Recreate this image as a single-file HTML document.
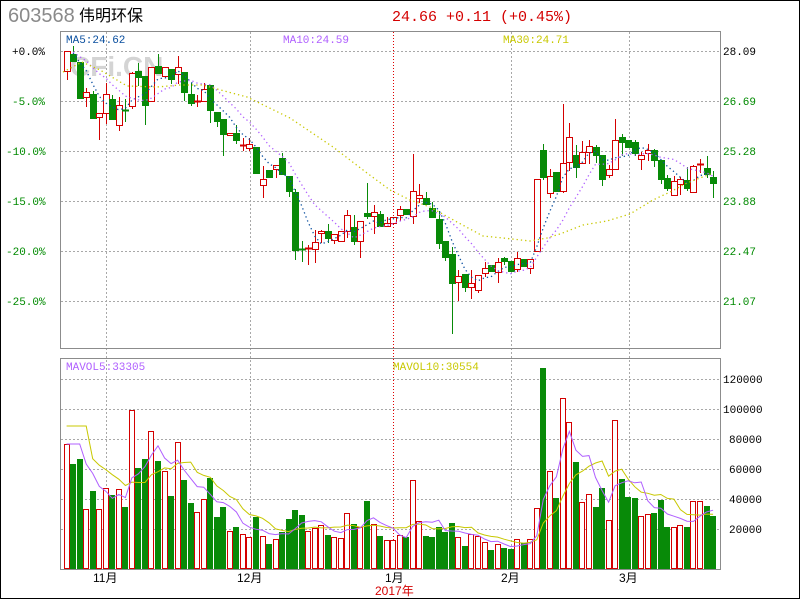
<!DOCTYPE html>
<html><head><meta charset="utf-8">
<style>
html,body{margin:0;padding:0;background:#fff;}
#w{position:relative;width:798px;height:597px;border:1px solid #000;overflow:hidden;font-family:"Liberation Mono","Noto Sans CJK SC",monospace;}
svg{position:absolute;left:-1px;top:-1px;}
</style></head><body>
<div id="w">
<svg id="s" width="800" height="600" xmlns="http://www.w3.org/2000/svg" font-family="Liberation Mono, Noto Sans CJK SC, monospace">
<text x="8" y="22" font-family="Liberation Sans, sans-serif" font-size="20" fill="#8a8a8a">603568</text>
<text x="79" y="21" font-family="Liberation Sans, Noto Sans CJK SC, sans-serif" font-size="16" fill="#000">伟明环保</text>
<text x="392" y="21" font-size="15" fill="#d40000">24.66 +0.11 (+0.45%)</text>
<text x="70" y="76" font-family="Liberation Sans, sans-serif" font-weight="bold" font-size="28" fill="#d4d4d4">CFi.CN</text>
<g id="grid"></g>
<rect x="60.5" y="31.5" width="660" height="317" fill="none" stroke="#8c8c8c"/>
<rect x="60.5" y="358.5" width="660" height="211" fill="none" stroke="#8c8c8c"/>
<g id="c"></g>
<text x="66" y="43" font-size="11" fill="#0a4f9f">MA5:24.62</text>
<text x="283" y="43" font-size="11" fill="#b060ff">MA10:24.59</text>
<text x="503" y="43" font-size="11" fill="#c8c800">MA30:24.71</text>
<text x="66" y="370" font-size="11" fill="#b060ff">MAVOL5:33305</text>
<text x="393" y="370" font-size="11" fill="#c8c800">MAVOL10:30554</text>
<g font-size="11">
<text x="12" y="55" fill="#000">+0.0%</text>
<text x="12" y="105" fill="#008a00">-5.0%</text>
<text x="6" y="155" fill="#008a00">-10.0%</text>
<text x="6" y="205" fill="#008a00">-15.0%</text>
<text x="6" y="255" fill="#008a00">-20.0%</text>
<text x="6" y="305" fill="#008a00">-25.0%</text>
<text x="723" y="55" fill="#000">28.09</text>
<text x="723" y="105" fill="#008a00">26.69</text>
<text x="723" y="155" fill="#008a00">25.28</text>
<text x="723" y="205" fill="#008a00">23.88</text>
<text x="723" y="255" fill="#008a00">22.47</text>
<text x="723" y="305" fill="#008a00">21.07</text>
<text x="723" y="383" fill="#000">120000</text>
<text x="723" y="413" fill="#000">100000</text>
<text x="729" y="443" fill="#000">80000</text>
<text x="729" y="473" fill="#000">60000</text>
<text x="729" y="503" fill="#000">40000</text>
<text x="729" y="533" fill="#000">20000</text>
</g>
<g font-size="12" font-family="Liberation Sans, Noto Sans CJK SC, sans-serif" fill="#000">
<text x="93" y="582">11月</text>
<text x="237" y="582">12月</text>
<text x="385" y="582">1月</text>
<text x="501" y="582">2月</text>
<text x="619" y="582">3月</text>
<text x="375" y="595" fill="#d40000">2017年</text>
</g>
</svg>
</div>
<script>
var NS="http://www.w3.org/2000/svg";
function el(p,t,a){var e=document.createElementNS(NS,t);for(var k in a)e.setAttribute(k,a[k]);p.appendChild(e);return e;}
var g=document.getElementById('grid'),c=document.getElementById('c');
[51,101,151,201,251,301].forEach(function(y){el(g,'line',{x1:61,x2:720,y1:y+.5,y2:y+.5,stroke:'#a8a8a8','stroke-dasharray':'2,2'});});
[379,409,439,469,499,529].forEach(function(y){el(g,'line',{x1:61,x2:720,y1:y+.5,y2:y+.5,stroke:'#a8a8a8','stroke-dasharray':'2,2'});});
[106,250,511,629].forEach(function(x){el(g,'line',{x1:x+.5,x2:x+.5,y1:32,y2:569,stroke:'#a8a8a8','stroke-dasharray':'2,2'});});
el(g,'line',{x1:393.5,x2:393.5,y1:32,y2:569,stroke:'#e00000','stroke-dasharray':'1,2'});
var D="R 51 71 51 79|G 54 61 46 61|G 62 98 62 98|R 92 97 88 106|G 94 118 91 118|R 113 117 113 139|R 94 113 83 123|G 99 119 95 119|R 105 125 97 130|G 110 110 99 121|R 73 106 72 108|G 71 77 63 85|G 76 105 76 124|R 67 101 67 101|G 66 73 54 73|R 67 76 67 77|G 69 79 69 83|R 67 74 56 83|G 72 92 72 100|G 94 103 83 105|R 101 101 95 106|R 89 101 83 101|G 85 110 85 122|G 112 121 112 126|G 119 134 119 155|R 133 135 133 135|G 133 140 125 143|R 145 145 138 150|R 144 148 138 150|G 147 173 147 173|R 179 185 166 197|G 170 177 170 177|R 165 169 165 177|G 158 174 153 174|G 176 191 176 196|G 192 250 189 259|G 249 249 241 261|R 248 248 245 264|R 242 249 230 262|R 231 233 230 242|G 231 238 224 242|R 234 240 234 243|R 231 241 231 241|R 215 231 210 237|G 227 241 215 244|R 221 241 221 257|G 213 216 183 218|R 212 216 205 233|G 214 226 211 226|R 223 226 217 226|R 217 223 217 223|R 209 215 206 220|G 209 214 209 214|R 191 216 154 223|R 195 198 184 202|G 198 204 192 204|G 208 217 202 217|G 219 243 211 248|G 241 257 241 260|G 254 283 247 333|R 276 282 270 300|G 274 287 274 291|R 283 287 270 298|R 275 290 275 292|R 268 273 262 276|G 265 271 265 271|R 262 272 258 282|G 258 261 257 264|G 261 271 261 271|R 258 269 252 271|G 259 266 259 266|R 259 268 259 273|R 179 251 179 251|G 150 177 144 179|R 176 193 169 197|G 172 191 172 191|R 163 191 104 192|R 137 162 123 170|G 155 167 145 177|R 152 163 141 163|R 146 152 140 163|G 147 155 145 162|G 155 179 155 185|R 169 175 165 177|R 140 169 119 169|G 137 142 134 155|G 140 147 140 147|G 142 153 140 155|R 155 159 152 169|R 150 153 144 160|G 150 160 149 166|G 160 179 160 183|G 178 188 175 190|R 181 195 176 195|R 179 184 177 194|G 180 188 167 190|R 166 192 165 192|R 164 164 159 172|G 168 174 156 177|G 177 183 171 197".split('|');
var V=[444,464,459,509,491,509,488,495,489,507,410,468,459,431,461,471,496,442,480,503,512,499,478,517,507,531,527,534,537,517,536,544,539,532,519,510,515,531,528,525,535,537,538,513,524,527,501,524,536,540,540,535,537,480,521,536,537,527,532,523,537,546,534,536,542,550,544,548,549,539,543,539,508,368,471,498,398,422,462,502,494,507,488,520,420,479,497,498,516,514,513,500,527,527,525,527,501,501,506,516];
var RED='#d40000',GR='#088a08';
function X(i){return 66.6+6.53*i;}
var closes=[];
// volume
V.forEach(function(t,i){var r=D[i].charAt(0)=='R';var x=Math.round(X(i))-3;
 if(r)el(c,'rect',{x:x+.5,y:t+.5,width:5,height:569-t-1,fill:'#fff',stroke:RED});
 else el(c,'rect',{x:x,y:t,width:6,height:569-t,fill:GR});});
D.forEach(function(s,i){var a=s.split(' '),r=a[0]=='R',bt=+a[1],bb=+a[2],wt=+a[3],wb=+a[4];var xc=Math.round(X(i));var col=r?RED:GR;
 closes.push(r?bt:bb);
 el(c,'line',{x1:xc+.5,x2:xc+.5,y1:wt,y2:wb+1,stroke:col});
 if(bb-bt<1){el(c,'line',{x1:xc-3,x2:xc+4,y1:bt+.5,y2:bt+.5,stroke:col,'stroke-width':2});}
 else if(r)el(c,'rect',{x:xc-2.5,y:bt+.5,width:6,height:bb-bt,fill:'#fff',stroke:col});
 else el(c,'rect',{x:xc-3,y:bt,width:7,height:bb-bt+1,fill:col});});
function ma(arr,n){return arr.map(function(_,i){var s=0;for(var k=i-n+1;k<=i;k++)s+=arr[Math.max(k,0)];return s/n;});}
function pl(vals,col,dash,start){var p=[];for(var i=start;i<vals.length;i++)p.push(X(i).toFixed(1)+','+vals[i].toFixed(1));var a={points:p.join(' '),fill:'none',stroke:col,'stroke-width':dash?1.3:1};if(dash)a['stroke-dasharray']='1.3,3';el(c,'polyline',a);}
pl(ma(closes,5),'#0a4f9f',1,1);
pl(ma(closes,10),'#b060ff',1,1);
el(c,'polyline',{points:"63,72 82,62 100,70 127,86 157,87 180,85 203,85 217,89 247,97 290,118 333,147 367,173 390,190 410,200 430,207 457,222 483,236 503,238 530,241 547,238 560,234 583,225 607,221 630,214 653,200 670,192 687,183 713,173",fill:'none',stroke:'#c8c800','stroke-width':1.3,'stroke-dasharray':'1.3,3'});
var vh=V.map(function(t){return 569-t;});
function vma(n){return ma(vh,n).map(function(h){return 569-h;});}
var v5=vma(5),v10=vma(10);
v5[0]=v5[1]=v5[2]=444;v10[0]=v10[1]=v10[2]=v10[3]=426;
pl(v10,'#c8c800',0,0);
pl(v5,'#b060ff',0,0);
</script>
</body></html>
